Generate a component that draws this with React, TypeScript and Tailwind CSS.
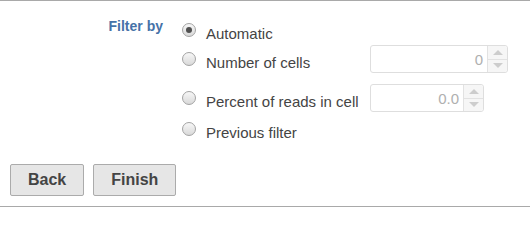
import React from "react";

function Radio({ checked }: { checked?: boolean }) {
  return (
    <div className="w-[14px] h-[14px] shrink-0 rounded-full border border-[#a3a3a3] bg-gradient-to-b from-[#f7f7f7] to-[#d9d9d9] flex items-center justify-center">
      {checked && <div className="w-[6px] h-[6px] rounded-full bg-[#4f4f4f]" />}
    </div>
  );
}

function Spin({ width, value }: { width: string; value: string }) {
  return (
    <div className={`${width} h-[28px] border border-[#dedede] rounded-[3px] flex bg-white`}>
      <div className="flex-1 flex items-center justify-end pr-[4px] text-[15px] leading-[17px] text-[#b0b0b0]">
        {value}
      </div>
      <div className="w-[20px] border-l border-[#e2e2e2] bg-[#f6f6f6] rounded-r-[3px] flex flex-col">
        <div className="flex-1 flex items-center justify-center border-b border-[#e2e2e2]">
          <div className="w-0 h-0 border-l-[5px] border-r-[5px] border-b-[5px] border-l-transparent border-r-transparent border-b-[#cdcdcd]" />
        </div>
        <div className="flex-1 flex items-center justify-center">
          <div className="w-0 h-0 border-l-[5px] border-r-[5px] border-t-[5px] border-l-transparent border-r-transparent border-t-[#cdcdcd]" />
        </div>
      </div>
    </div>
  );
}

function Option({ label, checked }: { label: string; checked?: boolean }) {
  return (
    <div className="w-[188px] flex items-center">
      <Radio checked={checked} />
      <span className="ml-[10px] mt-[7px] text-[15px] leading-[17px] text-[#444444] whitespace-nowrap">
        {label}
      </span>
    </div>
  );
}

export default function App() {
  return (
    <div className="w-[530px] h-[207px] bg-white border-t border-b border-[#a9a9a9] flex flex-col font-['Liberation_Sans',Arial,sans-serif]">
      <div className="flex pt-[16px]">
        <div className="w-[163px] text-right text-[14px] leading-[16px] font-bold text-[#4672a8] mt-[1px]">
          Filter by
        </div>
        <div className="ml-[19px] flex flex-col">
          <div className="h-[26px] flex items-center">
            <Option label="Automatic" checked />
          </div>
          <div className="mt-[2px] h-[28px] flex items-center">
            <Option label="Number of cells" />
            <Spin width="w-[138px]" value="0" />
          </div>
          <div className="mt-[11px] h-[28px] flex items-center">
            <Option label="Percent of reads in cell" />
            <Spin width="w-[114px]" value="0.0" />
          </div>
          <div className="mt-[4px] h-[26px] flex items-center">
            <Option label="Previous filter" />
          </div>
        </div>
      </div>
      <div className="flex gap-[9px] pl-[10px] mt-[22px]">
        <button className="h-[32px] px-[17px] border border-[#ababab] rounded-[2px] bg-[#e6e6e6] text-[16px] leading-[18px] font-bold text-[#444444]">
          Back
        </button>
        <button className="h-[32px] px-[17px] border border-[#ababab] rounded-[2px] bg-[#e6e6e6] text-[16px] leading-[18px] font-bold text-[#444444]">
          Finish
        </button>
      </div>
    </div>
  );
}
